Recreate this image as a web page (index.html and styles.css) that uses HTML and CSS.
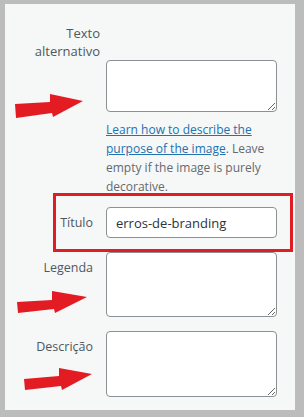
FILE: index.html
```html
<!DOCTYPE html>
<html lang="pt">
<head>
<meta charset="utf-8">
<title>Detalhes do anexo</title>
<link rel="stylesheet" href="styles.css">
</head>
<body>
<div class="panel">
  <div class="row row-alt">
    <label class="label label-alt" for="alt">Texto alternativo</label>
    <div class="field">
      <textarea id="alt" class="area area-alt"></textarea>
      <p class="help"><a href="#">Learn how to describe the purpose of the image</a>. Leave empty if the image is purely decorative.</p>
    </div>
  </div>
  <div class="row row-title">
    <label class="label" for="title">Título</label>
    <input id="title" class="input" type="text" value="erros-de-branding">
  </div>
  <div class="row">
    <label class="label label-top" for="caption">Legenda</label>
    <textarea id="caption" class="area area-big"></textarea>
  </div>
  <div class="row">
    <label class="label label-top" for="desc">Descrição</label>
    <textarea id="desc" class="area area-big2"></textarea>
  </div>
  <div class="highlight"></div>
  <svg class="arrows" width="304" height="417" viewBox="0 0 304 417">
    <polygon points="15,104 50,102 50,94 83,101 53,117 52,113 16,118"/>
    <polygon points="17,302 52,300 52,291 87,297 55,313 54,309 18,313"/>
    <polygon points="24,379 59,376 59,368 92,374 62,390 61,386 25,390"/>
  </svg>
</div>
</body>
</html>
```
FILE: styles.css
```css
html, body {
  margin: 0;
  padding: 0;
}
body {
  width: 304px;
  height: 417px;
  overflow: hidden;
  background: #bbbcbb;
  font-family: "Open Sans", "Noto Sans", sans-serif;
  font-size: 12.5px;
  color: #50575e;
}
.panel {
  position: relative;
  box-sizing: border-box;
  margin: 4px 9px 0 5px;
  width: 290px;
  height: 406px;
  background: #f6f7f7;
  padding-top: 20px;
}
.row {
  display: grid;
  grid-template-columns: 88px 171px;
  column-gap: 13px;
  align-items: start;
  margin-bottom: 14px;
}
.row-alt {
  margin-bottom: 11px;
}
.label {
  text-align: right;
  line-height: 18px;
  color: #50575e;
}
.label-alt {
  margin-right: -7px;
  padding-left: 20px;
  font-size: 13px;
}
.label-top {
  padding-top: 7px;
}
.row-title {
  align-items: center;
}
.field {
  display: flex;
  flex-direction: column;
}
.area {
  display: block;
  box-sizing: border-box;
  width: 171px;
  margin: 0;
  border: 1px solid #8c8f94;
  border-radius: 4px;
  background: #fff;
  font-family: inherit;
  font-size: 13px;
}
.area-alt {
  margin-top: 36px;
  height: 52px;
}
.area-big {
  height: 65px;
}
.area-big2 {
  height: 66px;
}
.help {
  margin: 8px 0 0;
  font-size: 12px;
  line-height: 19px;
  color: #646970;
}
.help a {
  color: #2271b1;
}
.input {
  box-sizing: border-box;
  width: 171px;
  height: 31px;
  margin: 0;
  padding: 0 9px;
  border: 1px solid #8c8f94;
  border-radius: 4px;
  background: #fff;
  font-family: inherit;
  font-size: 13px;
  color: #2c3338;
}
.highlight {
  position: absolute;
  left: 48px;
  top: 189px;
  width: 240px;
  height: 59px;
  box-sizing: border-box;
  border: 3px solid #e01c24;
}
.arrows {
  position: absolute;
  left: -5px;
  top: -4px;
  fill: #e31b23;
  pointer-events: none;
}
```
